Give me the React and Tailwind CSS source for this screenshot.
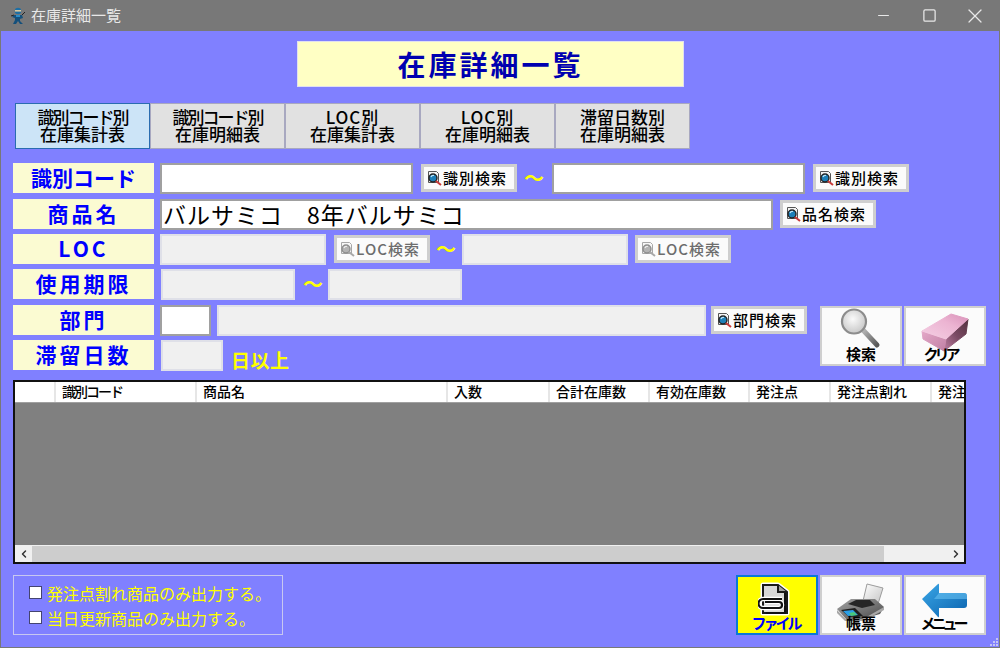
import { Minus, Square, X, ChevronLeft, ChevronRight } from 'lucide-react'

const tabs = [
  ['識別コード別', '在庫集計表', 'tracking-[-2px]'],
  ['識別コード別', '在庫明細表', 'tracking-[-2px]'],
  ['LOC別', '在庫集計表', 'tracking-[1px]'],
  ['LOC別', '在庫明細表', 'tracking-[1px]'],
  ['滞留日数別', '在庫明細表', ''],
]

const columns = [
  ['', 'w-[41px]', ''],
  ['識別コード', 'w-[141px]', 'tracking-[-2px]'],
  ['商品名', 'w-[251px]', ''],
  ['入数', 'w-[102px]', ''],
  ['合計在庫数', 'w-[100px]', ''],
  ['有効在庫数', 'w-[100px]', ''],
  ['発注点', 'w-[81px]', ''],
  ['発注点割れ', 'w-[101px]', ''],
  ['発注点', 'w-[60px]', ''],
]

function NinjaIcon() {
  return (
    <svg width="16" height="18" viewBox="0 0 16 18">
      <circle cx="8" cy="4" r="3.2" fill="#1d6fa5" />
      <rect x="5" y="3" width="6" height="1.6" fill="#d8c8a0" />
      <path d="M4 8h8l1 3-3 1v2l3 3h-3l-2-3-2 3H3l2-4V11L2 10z" fill="#14507c" />
      <path d="M1 9l3-1M12 8l3-3" stroke="#222" strokeWidth="1" />
      <path d="M6 8h4v2H6z" fill="#2a8cc8" />
    </svg>
  )
}

function SearchDocIcon({ disabled }) {
  return (
    <svg width="16" height="17" viewBox="0 0 16 17" className={disabled ? 'shrink-0 opacity-50 grayscale' : 'shrink-0'}>
      <path d="M1.500 1.500h8l2 2v9h-10z" fill="#f4f4f4" stroke="#555" />
      <circle cx="6" cy="8" r="4" fill="#1d7fb8" stroke="#222" strokeWidth="1.4" />
      <path d="M4 7a2.500 2.500 0 0 1 3-1.500" stroke="#bfe6fa" strokeWidth="1.2" fill="none" />
      <path d="M9 11l5 4" stroke="#c83a3a" strokeWidth="2" />
    </svg>
  )
}

function BigLens() {
  return (
    <svg width="46" height="42" viewBox="0 0 46 42" className="mt-[8px]">
      <defs>
        <radialGradient id="lens" cx="0.45" cy="0.4" r="0.7">
          <stop offset="0" stopColor="#fafafa" />
          <stop offset="1" stopColor="#c0c0c0" />
        </radialGradient>
        <linearGradient id="lensHandle" x1="0" y1="0" x2="1" y2="1">
          <stop offset="0" stopColor="#b8b8b8" />
          <stop offset="1" stopColor="#585858" />
        </linearGradient>
      </defs>
      <path d="M25 22l14 15" stroke="url(#lensHandle)" strokeWidth="5" strokeLinecap="round" />
      <circle cx="16" cy="13.500" r="12" fill="url(#lens)" stroke="#8c8c8c" strokeWidth="2.200" />
    </svg>
  )
}

function EraserIcon() {
  return (
    <svg width="50" height="40" viewBox="0 0 50 40" className="mt-[16px]">
      <defs>
        <linearGradient id="eraserTop" x1="0" y1="1" x2="1" y2="0">
          <stop offset="0" stopColor="#f4d0e4" />
          <stop offset="0.6" stopColor="#ecb4d2" />
          <stop offset="1" stopColor="#d890b8" />
        </linearGradient>
        <linearGradient id="eraserFront" x1="0" y1="0" x2="1" y2="1">
          <stop offset="0" stopColor="#e4a8c8" />
          <stop offset="1" stopColor="#c080a4" />
        </linearGradient>
        <linearGradient id="eraserSide" x1="0" y1="1" x2="1" y2="0">
          <stop offset="0" stopColor="#c080a4" />
          <stop offset="0.5" stopColor="#7a4a64" />
          <stop offset="1" stopColor="#54323f" />
        </linearGradient>
      </defs>
      <path d="M26 26L48 6l-2 15-22 17z" fill="url(#eraserSide)" stroke="url(#eraserSide)" strokeLinejoin="round" />
      <path d="M2 18l24 8-2 12-21-12z" fill="url(#eraserFront)" stroke="url(#eraserFront)" strokeLinejoin="round" />
      <path d="M2 18L31 1l17 5-22 20z" fill="url(#eraserTop)" stroke="url(#eraserTop)" strokeLinejoin="round" />
    </svg>
  )
}

function FileIcon() {
  return (
    <svg width="38" height="42" viewBox="0 0 38 42" className="mt-[10px]">
      <path d="M5 7h15l9 7v21H5z" fill="#fff" stroke="#fff" strokeWidth="5" strokeLinejoin="round" />
      <path d="M5 7h15l9 7v21H5z" fill="#d8d8d8" stroke="#1a1a1a" strokeWidth="2" />
      <path d="M20 7v7h9" fill="#a0a0a0" stroke="#1a1a1a" strokeWidth="2" />
      <path d="M27 15v20H8" fill="none" stroke="#111" strokeWidth="2" />
      <path d="M24 21H5a4.500 4.500 0 0 0 0 9h16a3 3 0 0 0 0-6H7" fill="none" stroke="#fff" strokeWidth="4.500" />
      <path d="M24 21H5a4.500 4.500 0 0 0 0 9h16a3 3 0 0 0 0-6H7" fill="none" stroke="#111" strokeWidth="2.200" />
    </svg>
  )
}

function PrinterIcon() {
  return (
    <svg width="50" height="38" viewBox="0 0 50 38" className="mt-[16px]">
      <defs>
        <linearGradient id="printerBody" x1="0" y1="0" x2="1" y2="1">
          <stop offset="0" stopColor="#a4a4a4" />
          <stop offset="1" stopColor="#4a4a4a" />
        </linearGradient>
        <linearGradient id="printerPaper" x1="0" y1="0" x2="1" y2="1">
          <stop offset="0" stopColor="#ffffff" />
          <stop offset="1" stopColor="#c4c4c4" />
        </linearGradient>
      </defs>
      <path d="M27 18L31 1l16 4-5 16z" fill="url(#printerPaper)" stroke="#9c9c9c" />
      <path d="M1 26l14-10h24l9 8-4 7-18 5H10z" fill="url(#printerBody)" />
      <path d="M12 21l8-4h14l5 5-13 3z" fill="#262626" />
      <path d="M5 27l14-2 8 8-14 1z" fill="#1e1e1e" />
      <path d="M7 28l10-1 5 5-10 1z" fill="#2c9ee6" />
      <path d="M13 30l5-1 3 3-6 1z" fill="#48c87c" />
      <path d="M1 27l9 9h17l21-12v3L27 38H9L1 30z" fill="#a8a8a8" />
    </svg>
  )
}

function BackArrowIcon() {
  return (
    <svg width="48" height="38" viewBox="0 0 48 38" className="mt-[16px]">
      <defs>
        <linearGradient id="arrowFill" x1="0" y1="0" x2="1" y2="1">
          <stop offset="0" stopColor="#3aa6e6" />
          <stop offset="1" stopColor="#0a62ae" />
        </linearGradient>
      </defs>
      <path d="M1 16L17 1q1-1 1 1v8h25q3 0 3 3v9q0 3-3 3H18v8q0 2-1 1z" fill="url(#arrowFill)" />
      <path d="M18 10h25q3 0 3 3v3H13z" fill="#6cc4f4" opacity="0.55" />
    </svg>
  )
}

function FieldLabel({ children, className = 'tracking-[3px]' }) {
  return (
    <div className={`flex h-[30px] w-[141px] shrink-0 items-center justify-center bg-[#fbfbd2] text-[21px] font-bold text-[#0000ff] ${className}`}>
      {children}
    </div>
  )
}

function TextBox({ width, disabled, value, className = '' }) {
  const tone = disabled
    ? 'border-[#dfe0e8] bg-[#f0f0f0]'
    : 'border-[#a0a0a0] bg-white'
  return (
    <input
      readOnly
      value={value || ''}
      className={`h-[31px] shrink-0 border-2 px-[1px] text-[23px] tracking-[1px] text-black outline-none ${tone} ${width} ${className}`}
    />
  )
}

function SearchButton({ label, disabled, className = '' }) {
  return (
    <button
      className={`flex h-[28px] w-[96px] shrink-0 items-center justify-start border-[3px] border-[#cfcfcf] bg-[#fbfbfb] pl-[3px] text-[15px] font-medium tracking-[1px] ${disabled ? 'text-[#6d6d6d]' : 'text-black'} ${className}`}
    >
      <SearchDocIcon disabled={disabled} />
      {label}
    </button>
  )
}

function Tilde({ className = '' }) {
  return <span className={`w-[20px] shrink-0 text-[20px] font-bold leading-none text-[#ffff00] ${className}`}>〜</span>
}

function ImageButton({ label, icon, active, labelClass = '', className = '' }) {
  return (
    <button
      className={`flex h-[60px] w-[82px] shrink-0 flex-col items-center justify-end border-2 pb-[1px] text-[15px] font-bold leading-[18px] ${active ? 'border-[#0a78d7] bg-[#ffff00] text-[#0000ff]' : 'border-[#cfcfcf] bg-[#fbfbfb] text-black'} ${className}`}
    >
      <span className="flex h-[40px] items-center justify-center">{icon}</span>
      <span className={`relative ${labelClass}`}>{label}</span>
    </button>
  )
}

export default function App() {
  return (
    <div className="flex h-[648px] w-[1000px] flex-col overflow-hidden border-x border-b border-[#787878] font-['Noto_Sans_CJK_JP',sans-serif]">
      {/* Title bar */}
      <div className="flex h-[31px] shrink-0 items-center bg-[#787878] pl-[9px] text-[#e8e8e8]">
        <NinjaIcon />
        <span className="ml-[5px] text-[15px]">在庫詳細一覧</span>
        <div className="ml-auto flex items-center">
          <Minus size={17} strokeWidth={1.5} className="mr-[30px]" />
          <Square size={15} strokeWidth={2} className="mr-[26px]" />
          <X size={24} strokeWidth={1.2} className="mr-[12px]" />
        </div>
      </div>

      <div className="relative flex flex-1 flex-col bg-[#8080ff] pl-[12px]">
        <div className="ml-[284px] mt-[10px] flex h-[46px] w-[387px] items-center justify-center border border-[#e0e0f0] bg-[#ffffc4] text-[28px] font-bold tracking-[3px] text-[#0000b0]">
          在庫詳細一覧
        </div>

        {/* Report tabs */}
        <div className="ml-[2px] mt-[16px] flex">
          {tabs.map((tab, i) => (
            <div
              key={i}
              className={`flex h-[46px] w-[135px] flex-col items-center justify-center border pb-[2px] text-[17px] font-medium leading-[17px] ${i === 0 ? 'border-[#2a6cb0] bg-[#cce4f7]' : 'border-[#a8a8c0] bg-[#e1e1e1]'}`}
            >
              <span className={tab[2]}>{tab[0]}</span>
              <span>{tab[1]}</span>
            </div>
          ))}
        </div>

        {/* Search form */}
        <div className="mt-[14px] flex h-[30px] items-center">
          <FieldLabel className="tracking-normal">識別コード</FieldLabel>
          <TextBox width="w-[253px]" className="ml-[6px]" />
          <SearchButton label="識別検索" className="ml-[8px]" />
          <Tilde className="ml-[7px]" />
          <TextBox width="w-[253px]" className="ml-[8px]" />
          <SearchButton label="識別検索" className="ml-[8px]" />
        </div>
        <div className="mt-[6px] flex h-[30px] items-center">
          <FieldLabel>商品名</FieldLabel>
          <TextBox width="w-[613px]" className="ml-[6px]" value="バルサミコ　8年バルサミコ" />
          <SearchButton label="品名検索" className="ml-[7px]" />
        </div>
        <div className="mt-[5px] flex h-[30px] items-center">
          <FieldLabel>LOC</FieldLabel>
          <TextBox width="w-[166px]" disabled className="ml-[6px]" />
          <SearchButton label="LOC検索" disabled className="ml-[8px]" />
          <Tilde className="ml-[6px]" />
          <TextBox width="w-[166px]" disabled className="ml-[6px]" />
          <SearchButton label="LOC検索" disabled className="ml-[7px]" />
        </div>
        <div className="mt-[5px] flex h-[30px] items-center">
          <FieldLabel>使用期限</FieldLabel>
          <TextBox width="w-[134px]" disabled className="ml-[7px]" />
          <Tilde className="ml-[8px]" />
          <TextBox width="w-[134px]" disabled className="ml-[5px]" />
        </div>

        <div className="mt-[6px] flex">
          <div className="flex flex-col">
            <div className="flex h-[30px] items-center">
              <FieldLabel>部門</FieldLabel>
              <TextBox width="w-[51px]" className="ml-[6px]" />
              <TextBox width="w-[489px]" disabled className="ml-[6px]" />
              <SearchButton label="部門検索" className="ml-[5px]" />
            </div>
            <div className="mt-[5px] flex h-[30px]">
              <FieldLabel>滞留日数</FieldLabel>
              <TextBox width="w-[62px]" disabled className="ml-[7px]" />
              <span className="ml-[8px] mt-[6px] text-[19px] font-bold tracking-[0.5px] text-[#ffff00]">日以上</span>
            </div>
          </div>
          <ImageButton label="検索" icon={<BigLens />} className="ml-[13px] mt-[1px]" />
          <ImageButton label="クリア" labelClass="mr-[10px] tracking-[-4px]" icon={<EraserIcon />} className="ml-[2px] mt-[1px]" />
        </div>

        {/* Result grid */}
        <div className="mt-[10px] flex h-[184px] w-[953px] flex-col border-2 border-[#111] bg-[#808080]">
          <div className="flex h-[21px] shrink-0 overflow-hidden border-b border-[#a0a0a0] bg-white">
            {columns.map(([name, width, extra], i) => (
              <div
                key={i}
                className={`shrink-0 whitespace-nowrap border-r-2 border-[#e6e6e6] pl-[6px] text-[14px] font-medium leading-[18px] ${width} ${extra}`}
              >
                {name}
              </div>
            ))}
          </div>
          <div className="flex-1" />
          <div className="flex h-[17px] shrink-0 border-t border-[#f0f0f0] bg-[#f0f0f0] text-[#333]">
            <div className="flex w-[17px] items-center justify-center">
              <ChevronLeft size={12} strokeWidth={3} />
            </div>
            <div className="w-[852px] bg-[#cdcdcd]" />
            <div className="flex-1" />
            <div className="flex w-[17px] items-center justify-center">
              <ChevronRight size={12} strokeWidth={3} />
            </div>
          </div>
        </div>

        {/* Output options and actions */}
        <div className="mt-[11px] flex">
          <div className="flex h-[60px] w-[270px] flex-col justify-center gap-[5px] border border-[#c8c8f0] pl-[15px] text-[16px] text-[#ffff00]">
            <label className="flex h-[20px] items-center">
              <span className="h-[13px] w-[13px] border border-[#444470] bg-white" />
              <span className="ml-[5px]">発注点割れ商品のみ出力する。</span>
            </label>
            <label className="flex h-[20px] items-center">
              <span className="h-[13px] w-[13px] border border-[#444470] bg-white" />
              <span className="ml-[5px]">当日更新商品のみ出力する。</span>
            </label>
          </div>
          <ImageButton label="ファイル" labelClass="mr-[3px] tracking-[-3px]" icon={<FileIcon />} active className="ml-[453px]" />
          <ImageButton label="帳票" icon={<PrinterIcon />} className="ml-[2px]" />
          <ImageButton label="メニュー" labelClass="mr-[5px] tracking-[-4px]" icon={<BackArrowIcon />} className="ml-[2px]" />
        </div>

        {/* Resize grip */}
        <svg width="8" height="8" viewBox="0 0 8 8" className="absolute bottom-[1px] right-[1px] fill-[#c4c4f4]">
          <rect x="6" y="0" width="2" height="2" />
          <rect x="3" y="3" width="2" height="2" />
          <rect x="6" y="3" width="2" height="2" />
          <rect x="0" y="6" width="2" height="2" />
          <rect x="3" y="6" width="2" height="2" />
          <rect x="6" y="6" width="2" height="2" />
        </svg>
      </div>
    </div>
  )
}
